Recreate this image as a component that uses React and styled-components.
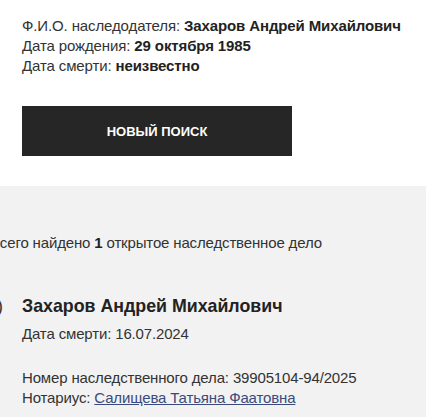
import React from "react";
import styled, { createGlobalStyle } from "styled-components";

const Global = createGlobalStyle`
    html, body {
        margin: 0;
        padding: 0;
        background: #fff;
    }
    body {
        font-family: "Liberation Sans", Arial, sans-serif;
        color: #333;
        overflow: hidden;
    }
`;

const Top = styled.div`
    padding: 16px 22px 30px;
    background: #fff;
`;
const Line = styled.p`
    margin: 0;
    font-size: 15px;
    line-height: 20px;
    color: #333;
    white-space: nowrap;
    letter-spacing: -0.12px;
    b {
        color: #222;
    }
`;
const Button = styled.button`
    display: flex;
    align-items: center;
    justify-content: center;
    width: 270px;
    height: 50px;
    margin-top: 30px;
    border: 0;
    background: #262626;
    color: #fff;
    font-family: inherit;
    font-size: 13px;
    font-weight: 700;
    text-transform: uppercase;
`;
const Results = styled.div`
    background: #f2f2f2;
    min-height: 240px;
    padding-top: 47px;
`;
const Summary = styled.p`
    margin: 0 0 0 -10px;
    font-size: 15px;
    line-height: 20px;
    letter-spacing: -0.15px;
    color: #333;
    white-space: nowrap;
    b {
        color: #222;
    }
`;
const Item = styled.div`
    display: flex;
    margin-top: 41px;
`;
const Num = styled.span`
    width: 25px;
    font-size: 18px;
    line-height: 24px;
    text-align: right;
    padding-right: 19px;
    margin-left: -22px;
    color: #333;
`;
const Card = styled.div`
    display: flex;
    flex-direction: column;
`;
const Name = styled.h3`
    margin: 0;
    font-size: 17.8px;
    line-height: 24px;
    font-weight: 700;
    color: #222;
    white-space: nowrap;
`;
const Meta = styled.p`
    margin: ${(p) => p.$gap || 0}px 0 0;
    font-size: 15px;
    line-height: 20px;
    letter-spacing: -0.15px;
    color: #333;
    white-space: nowrap;
`;
const Link = styled.a`
    color: #3b4a7d;
    text-decoration: underline;
`;

export default function App() {
    return (
        <>
            <Global />
            <Top>
                <Line>
                    Ф.И.О. наследодателя: <b>Захаров Андрей Михайлович</b>
                </Line>
                <Line>
                    Дата рождения: <b>29 октября 1985</b>
                </Line>
                <Line>
                    Дата смерти: <b>неизвестно</b>
                </Line>
                <Button>Новый поиск</Button>
            </Top>
            <Results>
                <Summary>
                    Всего найдено <b>1</b> открытое наследственное дело
                </Summary>
                <Item>
                    <Num>1)</Num>
                    <Card>
                        <Name>Захаров Андрей Михайлович</Name>
                        <Meta $gap={6}>Дата смерти: 16.07.2024</Meta>
                        <Meta $gap={24}>
                            Номер наследственного дела: 39905104-94/2025
                        </Meta>
                        <Meta>
                            Нотариус:{" "}
                            <Link href="#">Салищева Татьяна Фаатовна</Link>
                        </Meta>
                    </Card>
                </Item>
            </Results>
        </>
    );
}
